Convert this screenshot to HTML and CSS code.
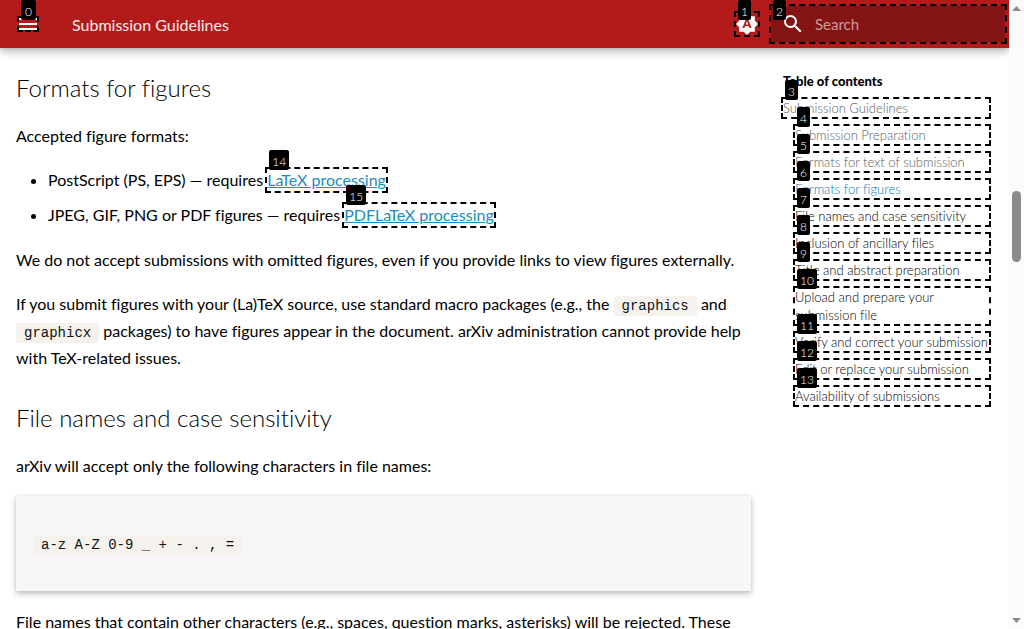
FILE: index.html
```html
<!DOCTYPE html>
<html lang="en">
<head>
<meta charset="utf-8">
<meta name="viewport" content="width=device-width, initial-scale=1">
<title>Submission Guidelines</title>
<link rel="stylesheet" href="styles.css">
</head>
<body>
<div class="page">
  <header class="header">
    <button class="menu marked" type="button" aria-label="Menu"><svg viewBox="0 0 18 12" aria-hidden="true"><path d="M0 0h18v2H0zm0 5h18v2H0zm0 5h18v2H0z"/></svg><span class="tag">0</span></button>
    <span class="title">Submission Guidelines</span>
    <button class="theme marked" type="button" aria-label="Toggle colour scheme"><svg viewBox="0 0 22 22" aria-hidden="true"><path fill-rule="evenodd" d="m11 0 3.2 3.2h4.6v4.6L22 11l-3.2 3.2v4.6h-4.6L11 22l-3.2-3.2H3.2v-4.6L0 11l3.2-3.2V3.2h4.6zM9.9 6 6.4 15h2l.8-2h3.6l.8 2h2L12.100 6zm-.1 5.500L11 8l1.200 3.500z"/></svg><span class="tag">1</span></button>
    <label class="search marked">
      <svg viewBox="0 0 24 24" aria-hidden="true"><path d="M9.500 3A6.500 6.500 0 0 1 16 9.500c0 1.610-.59 3.090-1.560 4.230l.27.27h.79l5 5-1.500 1.500-5-5v-.79l-.27-.27A6.520 6.520 0 0 1 9.500 16a6.500 6.500 0 0 1 0-13m0 2a4.500 4.500 0 1 0 0 9 4.500 4.500 0 0 0 0-9"/></svg>
      <input type="text" placeholder="Search" aria-label="Search"><span class="tag">2</span>
    </label>
  </header>
  <div class="columns">
    <main class="content">
      <h2>Formats for figures</h2>
      <p>Accepted figure formats:</p>
      <ul>
        <li>PostScript (PS, EPS) — requires <a class="marked" href="#latex">LaTeX processing<span class="tag">14</span></a></li>
        <li>JPEG, GIF, PNG or PDF figures — requires <a class="marked" href="#pdflatex">PDFLaTeX processing<span class="tag">15</span></a></li>
      </ul>
      <p>We do not accept submissions with omitted figures, even if you provide links to view figures externally.</p>
      <p>If you submit figures with your (La)TeX source, use standard macro packages (e.g., the <code>graphics</code> and <code>graphicx</code> packages) to have figures appear in the document. arXiv administration cannot provide help with TeX-related issues.</p>
      <h2>File names and case sensitivity</h2>
      <p>arXiv will accept only the following characters in file names:</p>
      <pre class="sample"><code>a-z A-Z 0-9 _ + - . , =</code></pre>
      <p>File names that contain other characters (e.g., spaces, question marks, asterisks) will be rejected. These</p>
    </main>
    <nav class="toc" aria-labelledby="toc-title">
      <strong id="toc-title">Table of contents</strong>
      <a class="marked root passed" href="#top">Submission Guidelines<span class="tag">3</span></a>
      <a class="marked passed" href="#preparation">Submission Preparation<span class="tag">4</span></a>
      <a class="marked passed" href="#text">Formats for text of submission<span class="tag">5</span></a>
      <a class="marked current" href="#figures">Formats for figures<span class="tag">6</span></a>
      <a class="marked" href="#names">File names and case sensitivity<span class="tag">7</span></a>
      <a class="marked" href="#ancillary">Inclusion of ancillary files<span class="tag">8</span></a>
      <a class="marked" href="#title">Title and abstract preparation<span class="tag">9</span></a>
      <a class="marked" href="#upload">Upload and prepare your submission file<span class="tag">10</span></a>
      <a class="marked" href="#verify">Verify and correct your submission<span class="tag">11</span></a>
      <a class="marked" href="#edit">Edit or replace your submission<span class="tag">12</span></a>
      <a class="marked" href="#availability">Availability of submissions<span class="tag">13</span></a>
    </nav>
  </div>
</div>
<div class="scrollbar" aria-hidden="true">
  <svg viewBox="0 0 9 5"><path d="M0 5 4.500 0 9 5z"/></svg>
  <div class="track"><div class="thumb"></div></div>
  <svg viewBox="0 0 9 5"><path d="M0 0h9L4.500 5z"/></svg>
</div>
</body>
</html>
```

FILE: styles.css
```css
* { box-sizing: border-box; }

body {
  margin: 0;
  height: 100vh;
  overflow: hidden;
  display: grid;
  grid-template-columns: minmax(0, 1fr) 15px;
  background: #fff;
  color: #000;
  font: 16px/27px Lato, "Open Sans", sans-serif;
  font-variant-ligatures: no-common-ligatures;
}

button { border: 0; padding: 0; background: none; color: inherit; }
svg { display: block; fill: currentColor; }

.page { min-width: 0; height: 100vh; overflow: hidden; }

.header {
  position: relative;
  display: flex;
  align-items: center;
  height: 48px;
  padding: 0 4px 0 19px;
  background: #b31b1b;
  color: #fff;
  box-shadow: 0 0 4px rgba(0, 0, 0, .15), 0 4px 8px rgba(0, 0, 0, .25);
}
.menu { width: 18px; height: 12px; }
.title { flex: 1; margin-left: 35px; font-size: 16px; color: #fbeaea; }
.theme { width: 22px; height: 22px; margin-right: 13px; }
.search {
  display: flex;
  align-items: center;
  width: 234px;
  height: 36px;
  padding-left: 10px;
  background: #821414;
}
.search svg { width: 24px; height: 24px; margin-right: 10px; }
.search input {
  flex: 1;
  min-width: 0;
  padding: 0;
  border: 0;
  outline: 0;
  background: none;
  color: #fff;
  font: 15px/24px Lato, sans-serif;
}
.search input::placeholder { color: #d09a9a; opacity: 1; }

/* Numbered link markers */
.marked { position: relative; outline: 2px dashed #000; }
.tag {
  position: absolute;
  z-index: 2;
  top: -19px;
  left: 2px;
  padding: 4px 3px 0;
  border-radius: 2px;
  background: #000;
  color: #fff;
  font: 300 12px/16px Lato, sans-serif;
}
.menu .tag { padding: 4px 4px 0; top: -18px; }
.theme .tag { top: -13px; }
.search .tag { top: -6px; }

.columns {
  display: grid;
  grid-template-columns: minmax(0, 1fr) 206px;
  gap: 32px;
  padding: 22px 20px 0 16px;
}
h2 { margin: 0 0 17px; font-size: 24px; line-height: 35px; font-weight: 300; }
p { margin: 0 0 17px; }
p + h2 { margin-top: 29px; }
ul { margin: 0 0 18px; padding-left: 32px; }
li + li { margin-top: 8px; }
.content a {
  padding: 1px 0 2px;
  color: #1e8bc3;
  text-decoration: underline;
}
code {
  padding: 2px 8px;
  border-radius: 2px;
  background: #f5f2ee;
  color: #111;
  font: 14px/18px "Liberation Mono", monospace;
}
.sample {
  margin: 0 0 17px;
  padding: 34px 17px;
  background: #f8f6f7;
  line-height: 27px;
  box-shadow: 0 0 4px rgba(0, 0, 0, .1), 0 3px 6px rgba(0, 0, 0, .22);
}

.toc { font-size: 13px; line-height: 18px; padding-top: 2px; }
.toc strong { display: block; font-weight: 900; margin-bottom: 9px; }
.toc a {
  display: block;
  margin: 0 0 9px 12px;
  color: #000;
  text-decoration: none;
  font-weight: 300;
}
.toc .root { margin-left: 0; }
.toc .passed { color: #5c5c5c; }
.toc .current { color: #0878b4; }

.scrollbar {
  display: flex;
  flex-direction: column;
  align-items: center;
  padding: 6px 0;
  background: #fcfcfc;
  color: #8b8b8b;
}
.scrollbar svg { width: 9px; height: 5px; }
.track { flex: 1; padding-top: 180px; }
.thumb { width: 9px; height: 71px; border-radius: 5px; background: #8b8b8b; }
```
